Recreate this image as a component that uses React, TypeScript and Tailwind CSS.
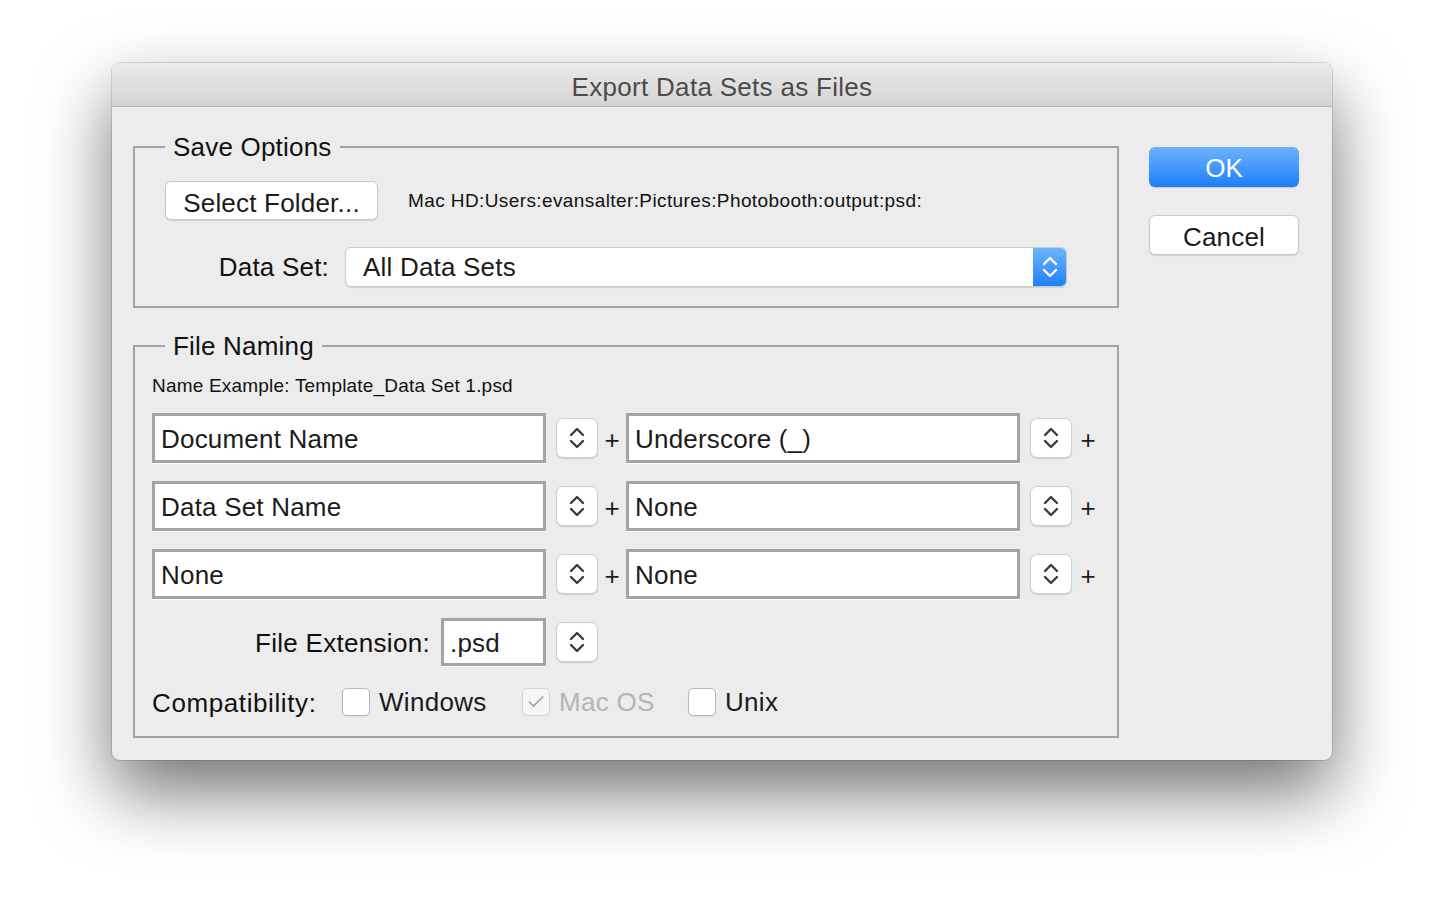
import { Check } from 'lucide-react'

const FONT = "font-['Liberation_Sans',Arial,sans-serif]"

function Chevrons({ light = false }: { light?: boolean }) {
  return (
    <svg
      width="16"
      height="22"
      viewBox="0 0 16 22"
      fill="none"
      stroke={light ? '#ffffff' : '#3c3c3c'}
      strokeWidth="2.4"
      strokeLinecap="round"
      strokeLinejoin="round"
    >
      <path d="M2 8 L8 2 L14 8" />
      <path d="M2 14 L8 20 L14 14" />
    </svg>
  )
}

function Stepper() {
  return (
    <div className="flex h-[40px] w-[42px] shrink-0 items-center justify-center rounded-[7px] border border-[#cdcdcd] bg-white shadow-[0_1px_1px_rgba(0,0,0,0.12)]">
      <Chevrons />
    </div>
  )
}

function TextField({ value, width = 'w-[394px]', height = 'h-[50px]' }: { value: string; width?: string; height?: string }) {
  return (
    <div
      className={`${width} ${height} flex shrink-0 items-center border-[3px] border-[#a4a4a4] bg-white pl-[6px] pt-[3px] text-[26px] tracking-[0.2px] text-[#1b1b1b] shadow-[0_1px_0_#ffffff]`}
    >
      {value}
    </div>
  )
}

function Plus({ className = '' }: { className?: string }) {
  return (
    <div className={`w-[28px] shrink-0 pt-[3px] text-center text-[26px] leading-none text-[#1b1b1b] ${className}`}>+</div>
  )
}

function NamingRow({ left, right }: { left: string; right: string }) {
  return (
    <div className="flex items-center">
      <TextField value={left} />
      <div className="ml-[10px] shrink-0">
        <Stepper />
      </div>
      <Plus />
      <TextField value={right} />
      <div className="ml-[10px] shrink-0">
        <Stepper />
      </div>
      <Plus className="ml-[2px]" />
    </div>
  )
}

function Checkbox({ label, checked = false, disabled = false, width }: { label: string; checked?: boolean; disabled?: boolean; width: string }) {
  return (
    <div className={`flex items-center ${width}`}>
      <div
        className={`flex h-[28px] w-[28px] items-center justify-center rounded-[5px] border ${
          disabled ? 'border-[#d3d3d3] bg-[#f5f5f5]' : 'border-[#b7b7b7] bg-white shadow-[0_1px_1px_rgba(0,0,0,0.08)]'
        }`}
      >
        {checked && <Check size={20} strokeWidth={2} color="#a2a2a2" />}
      </div>
      <span className={`ml-[9px] text-[26px] tracking-[0.3px] ${disabled ? 'text-[#b4b4b4]' : 'text-[#1b1b1b]'}`}>{label}</span>
    </div>
  )
}

function Group({ title, children }: { title: string; children: React.ReactNode }) {
  return (
    <fieldset className="min-w-0 border-2 border-[#a2a2a2] px-[17px] pb-[19px]">
      <legend className="ml-[13px] px-[8px] text-[26px] leading-[30px] tracking-[0.2px] text-[#111]">{title}</legend>
      {children}
    </fieldset>
  )
}

export default function App() {
  return (
    <div className={`min-h-[920px] w-full bg-white pt-[63px] ${FONT}`}>
      <div className="mx-auto flex h-[697px] w-[1220px] flex-col overflow-hidden rounded-[8px] bg-[#ececec] shadow-[0_32px_70px_rgba(0,0,0,0.55),0_0_0_1px_rgba(0,0,0,0.13)]">
        <div className="flex h-[44px] shrink-0 items-center justify-center border-b border-[#b3b3b3] bg-gradient-to-b from-[#ebebeb] to-[#d4d4d4] pt-[5px] text-[26px] tracking-[0.3px] text-[#4b4b4b]">
          Export Data Sets as Files
        </div>

        <div className="flex pl-[21px] pt-[25px]">
          <div className="flex w-[986px] shrink-0 flex-col gap-[23px]">
            <Group title="Save Options">
              <div className="mt-[19px] flex items-center">
                <button className="ml-[13px] h-[39px] w-[213px] rounded-[6px] border border-[#c9c9c9] bg-white pt-[2px] text-[26px] tracking-[0.2px] text-[#1b1b1b] shadow-[0_1px_1px_rgba(0,0,0,0.12)]">
                  Select Folder...
                </button>
                <span className="ml-[30px] pt-[2px] text-[19px] tracking-[0.4px] text-[#111]">
                  Mac HD:Users:evansalter:Pictures:Photobooth:output:psd:
                </span>
              </div>
              <div className="mt-[26px] flex items-center">
                <span className="w-[177px] pt-[2px] text-right text-[26px] tracking-[0.2px] text-[#111]">Data Set:</span>
                <div className="ml-[16px] flex h-[40px] w-[722px] items-stretch overflow-hidden rounded-[6px] border border-[#c9c9c9] bg-white shadow-[0_1px_1px_rgba(0,0,0,0.12)]">
                  <div className="flex flex-1 items-center pl-[17px] pt-[2px] text-[26px] tracking-[0.2px] text-[#1b1b1b]">All Data Sets</div>
                  <div className="flex w-[33px] items-center justify-center bg-gradient-to-b from-[#6db4fb] to-[#1a7ffb]">
                    <Chevrons light />
                  </div>
                </div>
              </div>
            </Group>

            <Group title="File Naming">
              <div className="mt-[14px] text-[19px] leading-[22px] tracking-[0.2px] text-[#111]">Name Example: Template_Data Set 1.psd</div>
              <div className="mt-[16px] flex flex-col gap-[18px]">
                <NamingRow left="Document Name" right="Underscore (_)" />
                <NamingRow left="Data Set Name" right="None" />
                <NamingRow left="None" right="None" />
              </div>
              <div className="mt-[19px] flex items-center">
                <span className="w-[278px] pt-[2px] text-right text-[26px] tracking-[0.3px] text-[#111]">File Extension:</span>
                <div className="ml-[11px]">
                  <TextField value=".psd" width="w-[105px]" height="h-[48px]" />
                </div>
                <div className="ml-[10px]">
                  <Stepper />
                </div>
              </div>
              <div className="mt-[21px] flex h-[30px] items-center">
                <span className="w-[190px] pt-[2px] text-[26px] tracking-[0.6px] text-[#111]">Compatibility:</span>
                <Checkbox label="Windows" width="w-[180px]" />
                <Checkbox label="Mac OS" checked disabled width="w-[166px]" />
                <Checkbox label="Unix" width="w-[120px]" />
              </div>
            </Group>
          </div>

          <div className="ml-[30px] mt-[15px] flex w-[150px] flex-col gap-[28px]">
            <button className="h-[40px] rounded-[6px] bg-gradient-to-b from-[#6ab2fb] to-[#1a7efb] pt-[2px] text-[26px] text-white shadow-[0_1px_1px_rgba(0,0,0,0.15)]">
              OK
            </button>
            <button className="h-[40px] rounded-[6px] border border-[#c9c9c9] bg-white pt-[2px] text-[26px] tracking-[0.2px] text-[#1b1b1b] shadow-[0_1px_1px_rgba(0,0,0,0.12)]">
              Cancel
            </button>
          </div>
        </div>
      </div>
    </div>
  )
}
